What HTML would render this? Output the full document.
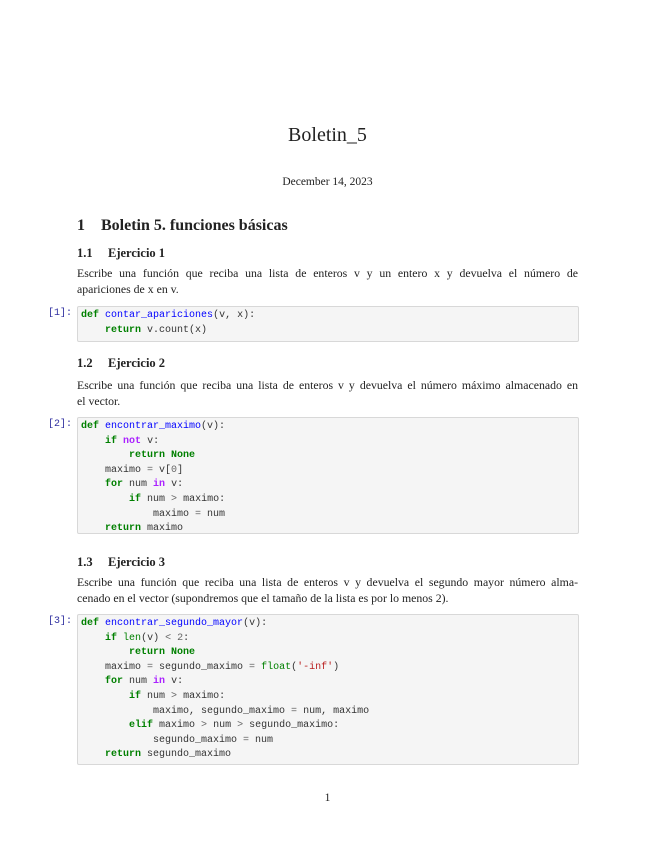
<!DOCTYPE html>
<html><head><meta charset="utf-8"><style>
body{margin:0;background:#fff;width:655px;height:848px;position:relative;overflow:hidden;font-family:"Liberation Serif",serif;color:#222}
.a{position:absolute;white-space:nowrap}
.c{left:0;width:655px;text-align:center}
.l{position:absolute;left:77px;width:501px;font-size:11.8px;white-space:nowrap}
.j{text-align:justify;text-align-last:justify}
.h1{font-size:16px;font-weight:bold}
.h2{font-size:12.5px;font-weight:bold}
.box{position:absolute;left:77px;width:500px;background:#f5f5f5;border:1px solid #d8d8d8;border-radius:2px}
pre{margin:0;padding:2px 0 0 3px;font-family:"Liberation Mono",monospace;font-size:10px;line-height:14.6px;color:#333}
.pr{position:absolute;left:48px;font-family:"Liberation Mono",monospace;font-size:10px;color:#3030a0}
.k{color:#008000;font-weight:bold}.f{color:#0000ff}.o{color:#aa22ff;font-weight:bold}.b{color:#008000}.s{color:#ba2121}.n{color:#666}
</style></head><body>
<div class="a c" style="top:124px;font-size:20px">Boletin_5</div>
<div class="a c" style="top:176px;font-size:11.5px">December 14, 2023</div>
<div class="a h1" style="top:217px;left:77px">1</div>
<div class="a h1" style="top:217px;left:101px">Boletin 5. funciones básicas</div>
<div class="a h2" style="top:246px;left:77px">1.1</div><div class="a h2" style="top:246px;left:108px">Ejercicio 1</div>
<div class="l j" style="top:266px">Escribe una función que reciba una lista de enteros v y un entero x y devuelva el número de</div>
<div class="l" style="top:282px">apariciones de x en v.</div>
<div class="pr" style="top:308px">[1]:</div>
<div class="box" style="top:306px;height:34px"><pre><span class="k">def</span> <span class="f">contar_apariciones</span>(v, x):
    <span class="k">return</span> v.count(x)</pre></div>
<div class="a h2" style="top:356px;left:77px">1.2</div><div class="a h2" style="top:356px;left:108px">Ejercicio 2</div>
<div class="l j" style="top:378px">Escribe una función que reciba una lista de enteros v y devuelva el número máximo almacenado en</div>
<div class="l" style="top:394px">el vector.</div>
<div class="pr" style="top:419px">[2]:</div>
<div class="box" style="top:417px;height:115px"><pre><span class="k">def</span> <span class="f">encontrar_maximo</span>(v):
    <span class="k">if</span> <span class="o">not</span> v:
        <span class="k">return</span> <span class="k">None</span>
    maximo <span class="n">=</span> v[<span class="n">0</span>]
    <span class="k">for</span> num <span class="o">in</span> v:
        <span class="k">if</span> num <span class="n">&gt;</span> maximo:
            maximo <span class="n">=</span> num
    <span class="k">return</span> maximo</pre></div>
<div class="a h2" style="top:555px;left:77px">1.3</div><div class="a h2" style="top:555px;left:108px">Ejercicio 3</div>
<div class="l j" style="top:575px">Escribe una función que reciba una lista de enteros v y devuelva el segundo mayor número alma-</div>
<div class="l" style="top:591px">cenado en el vector (supondremos que el tamaño de la lista es por lo menos 2).</div>
<div class="pr" style="top:616px">[3]:</div>
<div class="box" style="top:614px;height:149px"><pre><span class="k">def</span> <span class="f">encontrar_segundo_mayor</span>(v):
    <span class="k">if</span> <span class="b">len</span>(v) <span class="n">&lt;</span> <span class="n">2</span>:
        <span class="k">return</span> <span class="k">None</span>
    maximo <span class="n">=</span> segundo_maximo <span class="n">=</span> <span class="b">float</span>(<span class="s">'-inf'</span>)
    <span class="k">for</span> num <span class="o">in</span> v:
        <span class="k">if</span> num <span class="n">&gt;</span> maximo:
            maximo, segundo_maximo <span class="n">=</span> num, maximo
        <span class="k">elif</span> maximo <span class="n">&gt;</span> num <span class="n">&gt;</span> segundo_maximo:
            segundo_maximo <span class="n">=</span> num
    <span class="k">return</span> segundo_maximo</pre></div>
<div class="a c" style="top:792px;font-size:11.5px">1</div>
</body></html>
